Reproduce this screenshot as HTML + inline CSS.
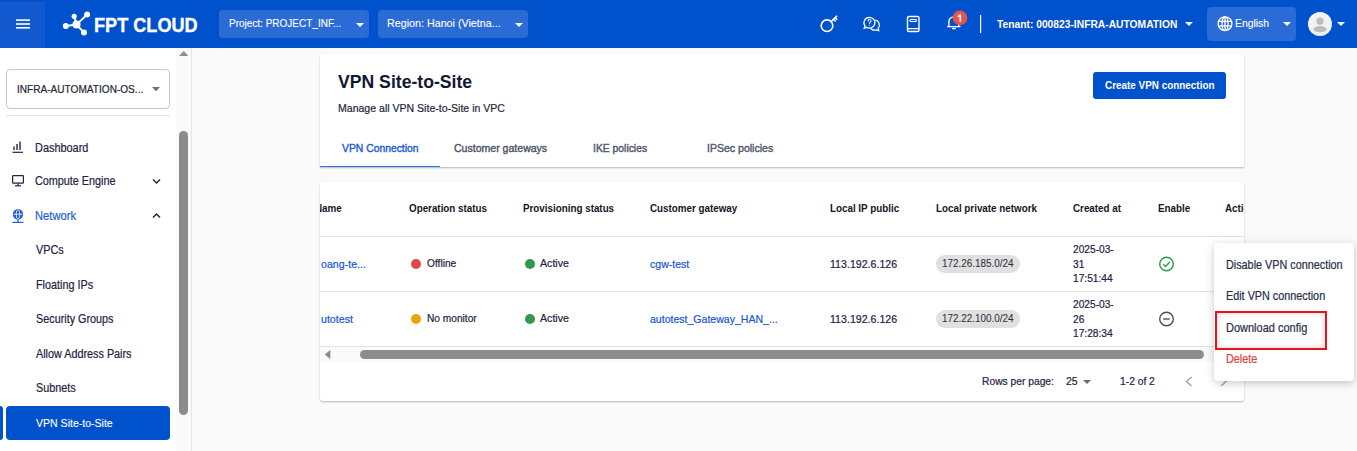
<!DOCTYPE html>
<html><head><meta charset="utf-8"><style>
html,body{margin:0;padding:0;width:1357px;height:451px;overflow:hidden;background:#fafafa;font-family:"Liberation Sans", sans-serif;}
.t{position:absolute;white-space:nowrap;line-height:1;}
.r{position:absolute;}
</style></head><body>
<div class="r" style="left:0px;top:48px;width:1357px;height:403px;background:#fafafa;"></div>
<div class="r" style="left:0px;top:0px;width:1357px;height:48px;background:#0052cc;"></div>
<div class="r" style="left:0px;top:2px;width:45px;height:46px;background:#1359d0;"></div>
<svg class="r" style="left:0;top:0" width="200" height="47"><rect x="16" y="19.3" width="14" height="1.6" fill="#fff"/><rect x="16" y="23.2" width="14" height="1.6" fill="#fff"/><rect x="16" y="27" width="14" height="1.6" fill="#fff"/><g stroke="#fff" stroke-width="2" fill="none"><line x1="66" y1="26" x2="76.5" y2="24.6"/><line x1="74.2" y1="16.2" x2="76.5" y2="24.6"/><line x1="87" y1="14.6" x2="76.5" y2="24.6"/><line x1="84" y1="32.6" x2="76.5" y2="24.6"/></g><g fill="#fff"><circle cx="76.5" cy="24.6" r="4"/><circle cx="65.8" cy="26" r="3"/><circle cx="74.2" cy="16.3" r="2.6"/><circle cx="87.1" cy="14.6" r="3"/><circle cx="84" cy="32.5" r="3"/></g></svg>
<div class="t" style="left:93.60px;top:16.00px;font-size:19.6px;color:#fff;font-weight:700;transform:scaleX(0.925);transform-origin:0 0;-webkit-text-stroke:0.3px #fff;">FPT CLOUD</div>
<div class="r" style="left:219px;top:10px;width:150px;height:28px;background:#2b6bd5;border-radius:4px;"></div>
<div class="t" style="left:228.50px;top:18.00px;font-size:11.0px;color:#fff;transform:scaleX(0.9091);transform-origin:0 0;-webkit-text-stroke:0.12px #fff;">Project: PROJECT_INF...</div>
<svg class="r" style="left:356px;top:22.5px" width="8" height="4.0"><polygon points="0,0 8,0 4.0,4.0" fill="#fff"/></svg>
<div class="r" style="left:378px;top:10px;width:150px;height:28px;background:#2b6bd5;border-radius:4px;"></div>
<div class="t" style="left:387.00px;top:18.00px;font-size:11.8px;color:#fff;transform:scaleX(0.9091);transform-origin:0 0;-webkit-text-stroke:0.12px #fff;">Region: Hanoi (Vietna...</div>
<svg class="r" style="left:515px;top:22.5px" width="8" height="4.0"><polygon points="0,0 8,0 4.0,4.0" fill="#fff"/></svg>
<svg class="r" style="left:800px;top:0" width="200" height="47"><g stroke="#fff" stroke-width="1.6" fill="none" stroke-linecap="round"><circle cx="27" cy="25.7" r="5.8"/><line x1="31.2" y1="21.6" x2="36.6" y2="16.2"/><line x1="33.6" y1="19.2" x2="35.4" y2="21"/><line x1="35.2" y1="17.6" x2="36.8" y2="19.2"/><path d="M69.5 17.3 a5.4 5.4 0 1 1 -2.9 10 l-2.4 0.9 l0.8 -2.3 a5.4 5.4 0 0 1 4.5 -8.6z" stroke-width="1.25"/><path d="M75.6 20.2 a4.9 4.9 0 0 1 2.6 8 l0.5 2.3 l-2.5 -0.7 a4.9 4.9 0 0 1 -5.4 -1.3" stroke-width="1.25"/><path d="M68.1 20.9 a1.45 1.45 0 1 1 2.3 1.2 q-0.8 0.45 -0.8 1.5" stroke-width="1.05"/><circle cx="69.6" cy="25.2" r="0.55" fill="#fff" stroke="none"/><rect x="107.5" y="16.5" width="11.5" height="15" rx="1.5" stroke-width="1.4"/><rect x="110" y="19.5" width="6.5" height="2" rx="1" stroke-width="1.1"/><line x1="108" y1="28.6" x2="118.5" y2="28.6" stroke-width="1.2"/><path d="M147.6 26.6 h12.4 M148.9 26.6 v-4.8 a4.9 4.9 0 0 1 9.8 0 v4.8" stroke-width="1.4"/><path d="M152.6 28.6 h2.6" stroke-width="1.5"/></g><circle cx="160" cy="17.85" r="7.35" fill="#e5534b"/><path d="M157.7 16.6 L160.3 14.9 V21.8" stroke="#fff" stroke-width="1.7" fill="none" stroke-linejoin="round"/><line x1="180.6" y1="15" x2="180.6" y2="33" stroke="#fff" stroke-width="1.2"/></svg>
<div class="t" style="left:997.40px;top:19.00px;font-size:11.3px;color:#fff;font-weight:700;transform:scaleX(0.9091);transform-origin:0 0;">Tenant: 000823-INFRA-AUTOMATION</div>
<svg class="r" style="left:1185px;top:22px" width="8" height="4"><polygon points="0,0 8,0 4.0,4" fill="#fff"/></svg>
<div class="r" style="left:1207px;top:7px;width:89px;height:34px;background:#2b6bd5;border-radius:4px;"></div>
<svg class="r" style="left:1210px;top:9px" width="30" height="30"><g stroke="#fff" stroke-width="1.3" fill="none"><circle cx="15" cy="14.7" r="6.9"/><ellipse cx="15" cy="14.7" rx="3" ry="6.9"/><line x1="8.1" y1="12.4" x2="21.9" y2="12.4"/><line x1="8.1" y1="17" x2="21.9" y2="17"/><line x1="15" y1="7.8" x2="15" y2="21.6"/></g></svg>
<div class="t" style="left:1234.50px;top:18.00px;font-size:11.4px;color:#fff;transform:scaleX(0.9091);transform-origin:0 0;-webkit-text-stroke:0.12px #fff;">English</div>
<svg class="r" style="left:1283px;top:22px" width="8" height="4"><polygon points="0,0 8,0 4.0,4" fill="#fff"/></svg>
<svg class="r" style="left:1308px;top:12px" width="24" height="24"><circle cx="12" cy="12" r="12" fill="#f2f2f2"/><circle cx="12" cy="9.2" r="3.6" fill="#bdbdbd"/><path d="M5.5 17 a6.5 3 0 0 1 13 0 v0.8 a6.5 2.4 0 0 1 -13 0z" fill="#bdbdbd"/></svg>
<svg class="r" style="left:1337px;top:22px" width="8" height="4"><polygon points="0,0 8,0 4.0,4" fill="#fff"/></svg>
<div class="r" style="left:0px;top:48px;width:191px;height:403px;background:#ffffff;"></div>
<div class="r" style="left:176px;top:48px;width:15px;height:403px;background:#fafafa;"></div>
<div class="r" style="left:191px;top:48px;width:1px;height:403px;background:#e6e6e6;"></div>
<svg class="r" style="left:178.8px;top:51px" width="9.5" height="5"><polygon points="4.75,0 9.5,5 0,5" fill="#8f8f8f"/></svg>
<div class="r" style="left:179px;top:131px;width:9px;height:284px;background:#8c8c8c;border-radius:4.5px;"></div>
<div class="r" style="left:6px;top:69px;width:164px;height:40px;background:#fff;border:1px solid #c8c8c8;border-radius:4px;box-sizing:border-box;"></div>
<div class="t" style="left:17.00px;top:84.00px;font-size:11.1px;color:#1f2937;transform:scaleX(0.9091);transform-origin:0 0;-webkit-text-stroke:0.22px #1f2937;">INFRA-AUTOMATION-OS...</div>
<svg class="r" style="left:152px;top:87px" width="8" height="4.299999999999997"><polygon points="0,0 8,0 4.0,4.299999999999997" fill="#707070"/></svg>
<div class="r" style="left:6px;top:115px;width:164px;height:1px;background:#e3e3e3;"></div>
<svg class="r" style="left:0;top:130px" width="180" height="100"><g fill="none" stroke-width="1.2"><g stroke="#1f2544"><line x1="12.5" y1="22.3" x2="23" y2="22.3"/><line x1="14" y1="20" x2="14" y2="16.5" stroke-width="1.4"/><line x1="17" y1="20" x2="17" y2="14" stroke-width="1.4"/><line x1="20" y1="20" x2="20" y2="11.5" stroke-width="1.4"/></g><g stroke="#1f2544"><rect x="12.6" y="45.6" width="10.8" height="7.6" rx="0.6"/><line x1="18" y1="53.4" x2="18" y2="55.6"/><line x1="15" y1="55.8" x2="21" y2="55.8"/></g><path d="M153 49.5 l3.5 3.5 l3.5 -3.5" stroke="#1f2544" stroke-width="1.5"/><g stroke="#1f5fd6"><circle cx="18" cy="84.2" r="4.6" fill="#1f5fd6"/><line x1="18" y1="89" x2="18" y2="92"/><line x1="12.5" y1="92.4" x2="23.5" y2="92.4"/></g><g stroke="#fff" stroke-width="0.8"><line x1="13.4" y1="84.2" x2="22.6" y2="84.2"/><ellipse cx="18" cy="84.2" rx="1.8" ry="4.6"/></g><path d="M153 87.5 l3.5 -3.5 l3.5 3.5" stroke="#1f2544" stroke-width="1.5"/></g></svg>
<div class="t" style="left:35.00px;top:142.00px;font-size:12.0px;color:#1f2544;transform:scaleX(0.9091);transform-origin:0 0;-webkit-text-stroke:0.22px #1f2544;">Dashboard</div>
<div class="t" style="left:35.00px;top:176.00px;font-size:11.9px;color:#1f2544;transform:scaleX(0.9091);transform-origin:0 0;-webkit-text-stroke:0.22px #1f2544;">Compute Engine</div>
<div class="t" style="left:35.00px;top:210.00px;font-size:12.3px;color:#1f5fd6;transform:scaleX(0.9091);transform-origin:0 0;-webkit-text-stroke:0.22px #1f5fd6;">Network</div>
<div class="t" style="left:36.00px;top:245.00px;font-size:11.9px;color:#1f2544;transform:scaleX(0.9091);transform-origin:0 0;-webkit-text-stroke:0.22px #1f2544;">VPCs</div>
<div class="t" style="left:36.00px;top:280.00px;font-size:11.9px;color:#1f2544;transform:scaleX(0.9091);transform-origin:0 0;-webkit-text-stroke:0.22px #1f2544;">Floating IPs</div>
<div class="t" style="left:36.00px;top:314.00px;font-size:11.9px;color:#1f2544;transform:scaleX(0.9091);transform-origin:0 0;-webkit-text-stroke:0.22px #1f2544;">Security Groups</div>
<div class="t" style="left:36.00px;top:349.00px;font-size:11.9px;color:#1f2544;transform:scaleX(0.9091);transform-origin:0 0;-webkit-text-stroke:0.22px #1f2544;">Allow Address Pairs</div>
<div class="t" style="left:36.00px;top:383.00px;font-size:11.9px;color:#1f2544;transform:scaleX(0.9091);transform-origin:0 0;-webkit-text-stroke:0.22px #1f2544;">Subnets</div>
<div class="r" style="left:0px;top:406px;width:3px;height:34px;background:#0052cc;border-radius:0 3px 3px 0;"></div>
<div class="r" style="left:6px;top:406px;width:164px;height:34px;background:#0052cc;border-radius:4px;"></div>
<div class="t" style="left:36.00px;top:417.00px;font-size:11.6px;color:#fff;transform:scaleX(0.9091);transform-origin:0 0;-webkit-text-stroke:0.12px #fff;">VPN Site-to-Site</div>
<div class="r" style="left:320px;top:54px;width:924px;height:113px;background:#fff;box-shadow:0 1px 2px rgba(0,0,0,0.28);border-radius:3px 3px 0 0;"></div>
<div class="t" style="left:338.30px;top:73.00px;font-size:18.5px;color:#121833;font-weight:700;transform:scaleX(0.9524);transform-origin:0 0;">VPN Site-to-Site</div>
<div class="t" style="left:338.00px;top:102.00px;font-size:11.6px;color:#1f2937;transform:scaleX(0.9091);transform-origin:0 0;-webkit-text-stroke:0.22px #1f2937;">Manage all VPN Site-to-Site in VPC</div>
<div class="r" style="left:1093px;top:72px;width:133px;height:27px;background:#0052cc;border-radius:3px;"></div>
<div class="t" style="left:1105.00px;top:80.00px;font-size:10.9px;color:#fff;font-weight:700;transform:scaleX(0.9091);transform-origin:0 0;">Create VPN connection</div>
<div class="t" style="left:341.80px;top:143.00px;font-size:11.4px;color:#1a5ad6;-webkit-text-stroke:0.4px #1a5ad6;transform:scaleX(0.9091);transform-origin:0 0;">VPN Connection</div>
<div class="t" style="left:453.60px;top:142.00px;font-size:11.6px;color:#4b5468;-webkit-text-stroke:0.4px #4b5468;transform:scaleX(0.9091);transform-origin:0 0;">Customer gateways</div>
<div class="t" style="left:593.00px;top:143.00px;font-size:11.4px;color:#4b5468;-webkit-text-stroke:0.4px #4b5468;transform:scaleX(0.9091);transform-origin:0 0;">IKE policies</div>
<div class="t" style="left:707.00px;top:142.00px;font-size:11.6px;color:#4b5468;-webkit-text-stroke:0.4px #4b5468;transform:scaleX(0.9091);transform-origin:0 0;">IPSec policies</div>
<div class="r" style="left:320px;top:165.6px;width:120px;height:1.5999999999999943px;background:#2f72e4;"></div>
<div class="r" style="left:320px;top:182px;width:924px;height:219px;background:#fff;box-shadow:0 1px 2px rgba(0,0,0,0.28);border-radius:3px;"></div>
<div class="r" style="left:320px;top:182px;width:924px;height:219px;overflow:hidden">
<div class="t" style="left:-5.50px;top:21.00px;font-size:10.8px;color:#111827;font-weight:700;transform:scaleX(0.9091);transform-origin:0 0;">Name</div>
<div class="t" style="left:0.60px;top:76.00px;font-size:11.7px;color:#1a56d6;transform:scaleX(0.9091);transform-origin:0 0;-webkit-text-stroke:0.22px #1a56d6;">oang-te...</div>
<div class="t" style="left:0.60px;top:131.00px;font-size:11.7px;color:#1a56d6;transform:scaleX(0.9091);transform-origin:0 0;-webkit-text-stroke:0.22px #1a56d6;">utotest</div>
<div class="t" style="left:905.40px;top:21.00px;font-size:10.8px;color:#111827;font-weight:700;transform:scaleX(0.9091);transform-origin:0 0;">Action</div>
</div>
<div class="t" style="left:408.70px;top:203.00px;font-size:10.8px;color:#111827;font-weight:700;transform:scaleX(0.9091);transform-origin:0 0;">Operation status</div>
<div class="t" style="left:522.60px;top:203.00px;font-size:10.8px;color:#111827;font-weight:700;transform:scaleX(0.9091);transform-origin:0 0;">Provisioning status</div>
<div class="t" style="left:649.80px;top:203.00px;font-size:10.8px;color:#111827;font-weight:700;transform:scaleX(0.9091);transform-origin:0 0;">Customer gateway</div>
<div class="t" style="left:830.10px;top:203.00px;font-size:10.8px;color:#111827;font-weight:700;transform:scaleX(0.9091);transform-origin:0 0;">Local IP public</div>
<div class="t" style="left:935.80px;top:203.00px;font-size:10.8px;color:#111827;font-weight:700;transform:scaleX(0.9091);transform-origin:0 0;">Local private network</div>
<div class="t" style="left:1073.00px;top:203.00px;font-size:10.8px;color:#111827;font-weight:700;transform:scaleX(0.9091);transform-origin:0 0;">Created at</div>
<div class="t" style="left:1157.60px;top:203.00px;font-size:10.8px;color:#111827;font-weight:700;transform:scaleX(0.9091);transform-origin:0 0;">Enable</div>
<div class="r" style="left:320px;top:236px;width:924px;height:1px;background:#e3e3e3;"></div>
<div class="r" style="left:320px;top:291px;width:924px;height:1px;background:#e3e3e3;"></div>
<div class="r" style="left:320px;top:346px;width:924px;height:1px;background:#e3e3e3;"></div>
<svg class="r" style="left:405px;top:258.2px" width="130" height="12"><circle cx="11" cy="6" r="5" fill="#e04646"/><circle cx="125" cy="6" r="5" fill="#2e9a4b"/></svg>
<div class="t" style="left:426.70px;top:258.00px;font-size:11.2px;color:#1e2443;transform:scaleX(0.9091);transform-origin:0 0;-webkit-text-stroke:0.22px #1e2443;">Offline</div>
<div class="t" style="left:540.00px;top:257.00px;font-size:11.7px;color:#1e2443;transform:scaleX(0.9091);transform-origin:0 0;-webkit-text-stroke:0.22px #1e2443;">Active</div>
<div class="t" style="left:650.00px;top:258.00px;font-size:11.6px;color:#1a56d6;transform:scaleX(0.9091);transform-origin:0 0;-webkit-text-stroke:0.22px #1a56d6;">cgw-test</div>
<div class="t" style="left:830.00px;top:258.00px;font-size:11.7px;color:#1e2443;transform:scaleX(0.9091);transform-origin:0 0;-webkit-text-stroke:0.22px #1e2443;">113.192.6.126</div>
<div class="r" style="left:936px;top:255px;width:84px;height:18px;background:#e0e0e0;border-radius:9px;"></div>
<div class="t" style="left:941.60px;top:258.00px;font-size:10.9px;color:#2a2f3d;-webkit-text-stroke:0.05px #2a2f3d;transform:scaleX(0.9091);transform-origin:0 0;">172.26.185.0/24</div>
<div class="t" style="left:1073.00px;top:244.00px;font-size:11.2px;color:#1e2443;transform:scaleX(0.9091);transform-origin:0 0;-webkit-text-stroke:0.22px #1e2443;">2025-03-</div>
<div class="t" style="left:1073.00px;top:259.00px;font-size:11.2px;color:#1e2443;transform:scaleX(0.9091);transform-origin:0 0;-webkit-text-stroke:0.22px #1e2443;">31</div>
<div class="t" style="left:1073.00px;top:273.00px;font-size:11.2px;color:#1e2443;transform:scaleX(0.9091);transform-origin:0 0;-webkit-text-stroke:0.22px #1e2443;">17:51:44</div>
<svg class="r" style="left:1156px;top:254.2px" width="20" height="20"><circle cx="10.5" cy="10" r="6.8" fill="none" stroke="#2e9a4b" stroke-width="1.4"/><path d="M7.4 10.2 l2.2 2.2 l4.2 -4.4" fill="none" stroke="#2e9a4b" stroke-width="1.4"/></svg>
<svg class="r" style="left:405px;top:313.1px" width="130" height="12"><circle cx="11" cy="6" r="5" fill="#eba40f"/><circle cx="125" cy="6" r="5" fill="#2e9a4b"/></svg>
<div class="t" style="left:426.70px;top:313.00px;font-size:11.2px;color:#1e2443;transform:scaleX(0.9091);transform-origin:0 0;-webkit-text-stroke:0.22px #1e2443;">No monitor</div>
<div class="t" style="left:540.00px;top:312.00px;font-size:11.7px;color:#1e2443;transform:scaleX(0.9091);transform-origin:0 0;-webkit-text-stroke:0.22px #1e2443;">Active</div>
<div class="t" style="left:650.00px;top:313.00px;font-size:11.6px;color:#1a56d6;transform:scaleX(0.9091);transform-origin:0 0;-webkit-text-stroke:0.22px #1a56d6;">autotest_Gateway_HAN_...</div>
<div class="t" style="left:830.00px;top:313.00px;font-size:11.7px;color:#1e2443;transform:scaleX(0.9091);transform-origin:0 0;-webkit-text-stroke:0.22px #1e2443;">113.192.6.126</div>
<div class="r" style="left:936px;top:310px;width:84px;height:18px;background:#e0e0e0;border-radius:9px;"></div>
<div class="t" style="left:941.60px;top:313.00px;font-size:10.9px;color:#2a2f3d;-webkit-text-stroke:0.05px #2a2f3d;transform:scaleX(0.9091);transform-origin:0 0;">172.22.100.0/24</div>
<div class="t" style="left:1073.00px;top:299.00px;font-size:11.2px;color:#1e2443;transform:scaleX(0.9091);transform-origin:0 0;-webkit-text-stroke:0.22px #1e2443;">2025-03-</div>
<div class="t" style="left:1073.00px;top:314.00px;font-size:11.2px;color:#1e2443;transform:scaleX(0.9091);transform-origin:0 0;-webkit-text-stroke:0.22px #1e2443;">26</div>
<div class="t" style="left:1073.00px;top:328.00px;font-size:11.2px;color:#1e2443;transform:scaleX(0.9091);transform-origin:0 0;-webkit-text-stroke:0.22px #1e2443;">17:28:34</div>
<svg class="r" style="left:1156px;top:309.1px" width="20" height="20"><circle cx="10.5" cy="10" r="6.8" fill="none" stroke="#4d4f55" stroke-width="1.4"/><line x1="7.2" y1="10" x2="13.8" y2="10" stroke="#4d4f55" stroke-width="1.4"/></svg>
<div class="r" style="left:321px;top:347px;width:923px;height:15px;background:#fafafa;"></div>
<svg class="r" style="left:324px;top:349px" width="8" height="12"><polygon points="6.3,0.9 6.3,10.1 0.8,5.5" fill="#8a8a8a"/></svg>
<div class="r" style="left:360px;top:350px;width:844px;height:9px;background:#8c8c8c;border-radius:4.5px;"></div>
<div class="t" style="left:981.50px;top:376.00px;font-size:11.3px;color:#1e2443;transform:scaleX(0.9091);transform-origin:0 0;-webkit-text-stroke:0.22px #1e2443;">Rows per page:</div>
<div class="t" style="left:1066.00px;top:375.00px;font-size:11.6px;color:#1e2443;transform:scaleX(0.9091);transform-origin:0 0;-webkit-text-stroke:0.22px #1e2443;">25</div>
<svg class="r" style="left:1083px;top:380px" width="8" height="4"><polygon points="0,0 8,0 4.0,4" fill="#6b6b6b"/></svg>
<div class="t" style="left:1120.20px;top:376.00px;font-size:11.3px;color:#1e2443;transform:scaleX(0.9091);transform-origin:0 0;-webkit-text-stroke:0.22px #1e2443;">1-2 of 2</div>
<svg class="r" style="left:1180px;top:372px" width="50" height="20"><path d="M11.5 5 l-5 4.5 l5 4.5" fill="none" stroke="#a0a0a0" stroke-width="1.3"/><path d="M41 5 l5 4.5 l-5 4.5" fill="none" stroke="#a0a0a0" stroke-width="1.3"/></svg>
<div class="r" style="left:1214px;top:243px;width:140px;height:138px;background:#fff;border-radius:4px;box-shadow:0 2px 8px rgba(0,0,0,0.22);"></div>
<div class="t" style="left:1226.00px;top:260.00px;font-size:11.9px;color:#283048;transform:scaleX(0.9091);transform-origin:0 0;-webkit-text-stroke:0.22px #283048;">Disable VPN connection</div>
<div class="t" style="left:1226.00px;top:291.00px;font-size:11.9px;color:#283048;transform:scaleX(0.9091);transform-origin:0 0;-webkit-text-stroke:0.22px #283048;">Edit VPN connection</div>
<div class="r" style="left:1215px;top:311px;width:112px;height:39px;background:transparent;border:2px solid #e8141b;box-sizing:border-box;box-shadow:inset 0 0 6px rgba(0,0,0,0.18);"></div>
<div class="t" style="left:1226.00px;top:322.00px;font-size:12.1px;color:#283048;transform:scaleX(0.9091);transform-origin:0 0;-webkit-text-stroke:0.22px #283048;">Download config</div>
<div class="t" style="left:1226.00px;top:354.00px;font-size:11.9px;color:#d9443d;transform:scaleX(0.9091);transform-origin:0 0;-webkit-text-stroke:0.22px #d9443d;">Delete</div>
</body></html>
